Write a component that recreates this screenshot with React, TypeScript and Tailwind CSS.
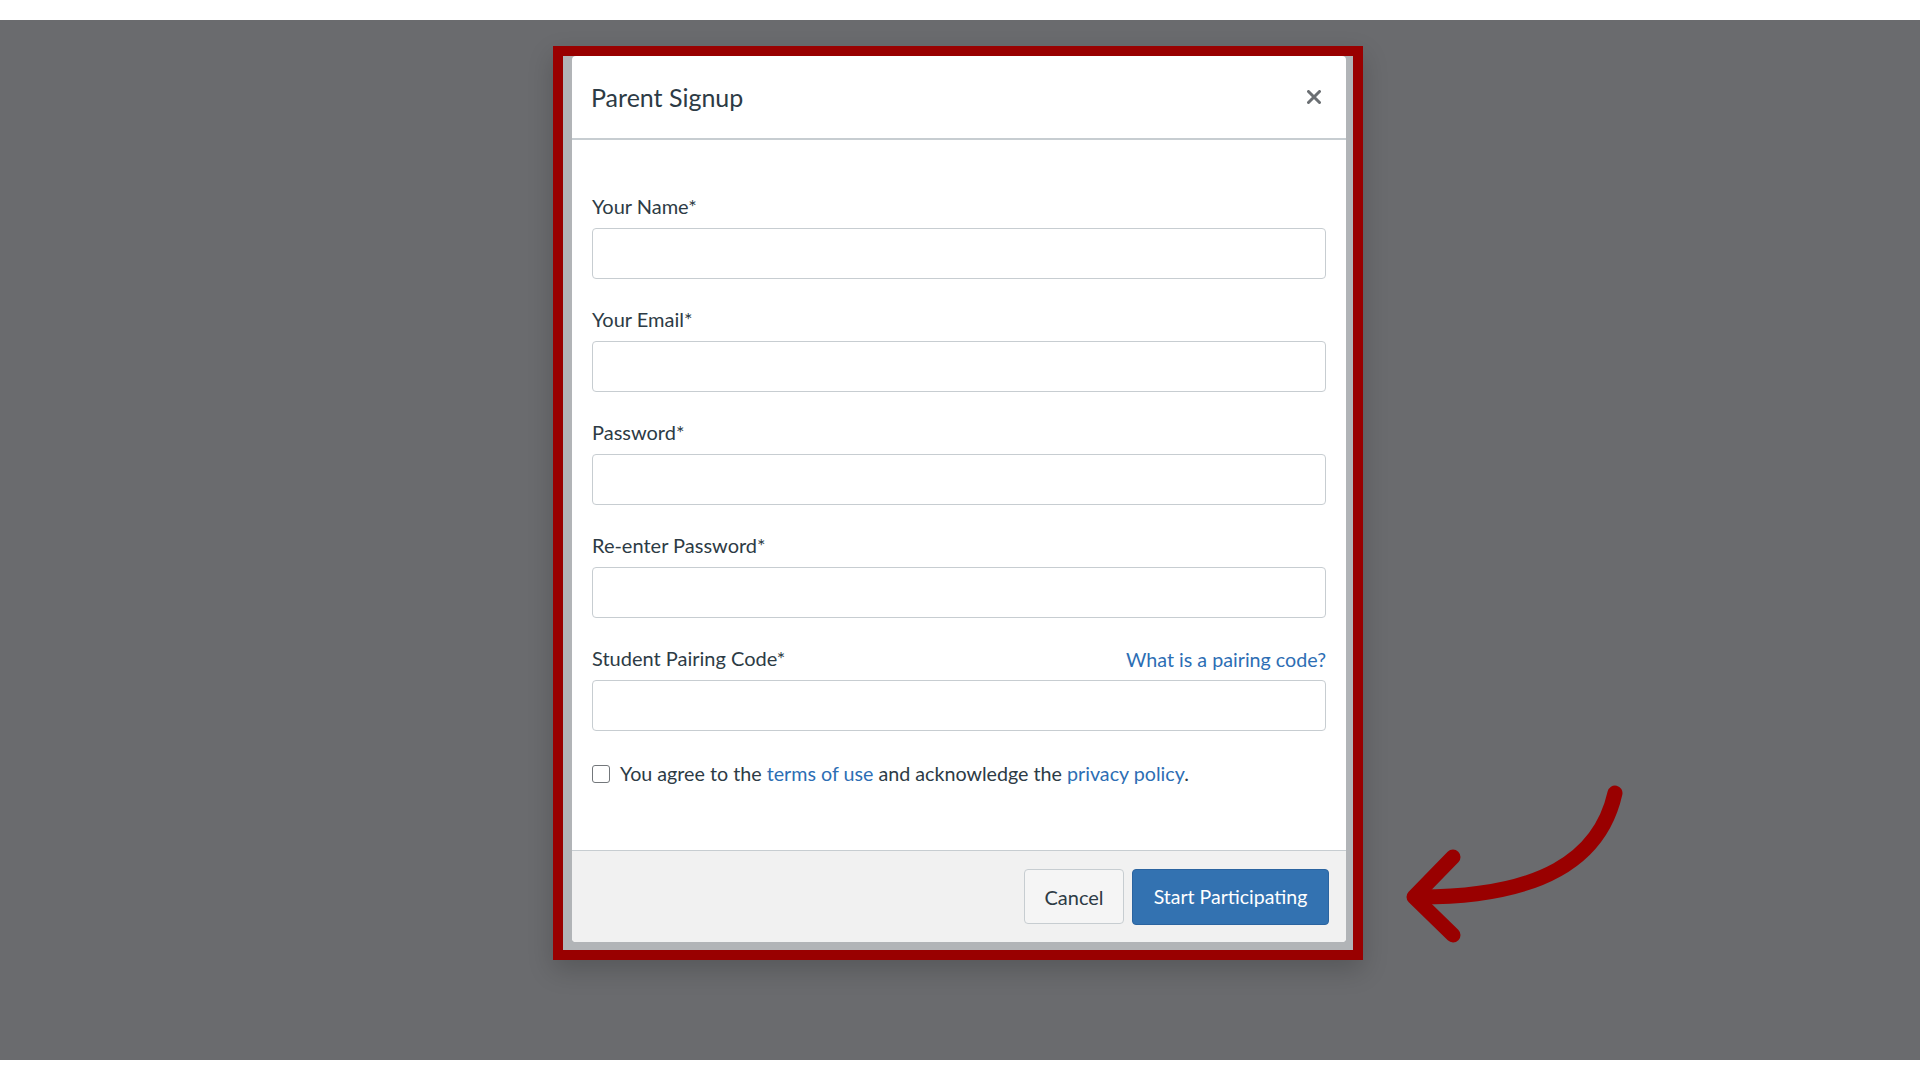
import React from "react";

const fields = ["Your Name*", "Your Email*", "Password*", "Re-enter Password*"];

function Field({ label, extra }: { label: string; extra?: React.ReactNode }) {
  return (
    <div className="mb-[28px]">
      <div className="flex items-start justify-between">
        <label className="text-[20px] leading-[24px] text-[#2d3b45]">{label}</label>
        {extra}
      </div>
      <input
        type="text"
        className="mt-[10px] block h-[51px] w-full rounded-[4px] border border-[#c7cdd1] bg-white px-3 outline-none"
      />
    </div>
  );
}

export default function App() {
  return (
    <div
      className="relative h-[1080px] w-full bg-white pt-[20px]"
      style={{ fontFamily: "Lato, 'Open Sans', sans-serif" }}
    >
      <div className="h-[1040px] bg-[#6a6b6e] pt-[26px]">
        <div className="ml-[553px] w-[810px] border-[10px] border-[#990000] bg-[#b1b4b7] pb-[8px] pl-[9px] pr-[7px] shadow-[0_10px_24px_rgba(0,0,0,0.18)]">
          <div className="overflow-hidden rounded-[4px] bg-white">
            {/* header */}
            <div className="flex h-[84px] items-center justify-between border-b-2 border-[#c7cdd1] pl-[19px] pr-[21px]">
              <h2 className="text-[25px] leading-[30px] text-[#2d3b45]">Parent Signup</h2>
              <button type="button" aria-label="Close" className="p-1">
                <svg width="14" height="14" viewBox="0 0 14 14">
                  <path
                    d="M1.5 1.5 L12.5 12.5 M12.5 1.5 L1.5 12.5"
                    stroke="#6b6f73"
                    strokeWidth="3"
                    strokeLinecap="round"
                  />
                </svg>
              </button>
            </div>

            {/* body */}
            <div className="px-[20px] pb-[64px] pt-[54px]">
              {fields.map((f) => (
                <Field key={f} label={f} />
              ))}
              <Field
                label="Student Pairing Code*"
                extra={
                  <a href="#" className="translate-y-[2px] text-[19.7px] leading-[24px] text-[#2d6eb4]">
                    What is a pairing code?
                  </a>
                }
              />
              <div className="mt-[31px] flex items-center gap-[10px]">
                <span className="block h-[18px] w-[18px] rounded-[3px] border-[1.5px] border-[#73777b] bg-white" />
                <span className="text-[19.7px] leading-[24px] text-[#2d3b45]">
                  You agree to the{" "}
                  <a href="#" className="text-[#2d6eb4]">
                    terms of use
                  </a>{" "}
                  and acknowledge the{" "}
                  <a href="#" className="text-[#2d6eb4]">
                    privacy policy
                  </a>
                  .
                </span>
              </div>
            </div>

            {/* footer */}
            <div className="flex justify-end gap-[8px] border-t border-[#c7cdd1] bg-[#f1f1f1] pb-[17px] pl-[20px] pr-[17px] pt-[18px]">
              <button
                type="button"
                className="h-[55px] w-[100px] rounded-[4px] border border-[#c7cdd1] bg-[#f5f5f5] text-[20px] text-[#2d3b45]"
              >
                Cancel
              </button>
              <button
                type="button"
                className="h-[56px] w-[197px] rounded-[4px] border border-[#2b64a0] bg-[#3372b1] text-[19.5px] text-white"
              >
                Start Participating
              </button>
            </div>
          </div>
        </div>
      </div>

      {/* annotation arrow */}
      <svg
        className="pointer-events-none absolute left-0 top-0"
        width="1920"
        height="1080"
        viewBox="0 0 1920 1080"
      >
        <g fill="none" stroke="#990000" strokeWidth="15" strokeLinecap="round" strokeLinejoin="round">
          <path d="M1615 793 C1600 860 1540 897 1420 897" />
          <path d="M1453 857 L1414 897 L1453 935" />
        </g>
      </svg>
    </div>
  );
}
